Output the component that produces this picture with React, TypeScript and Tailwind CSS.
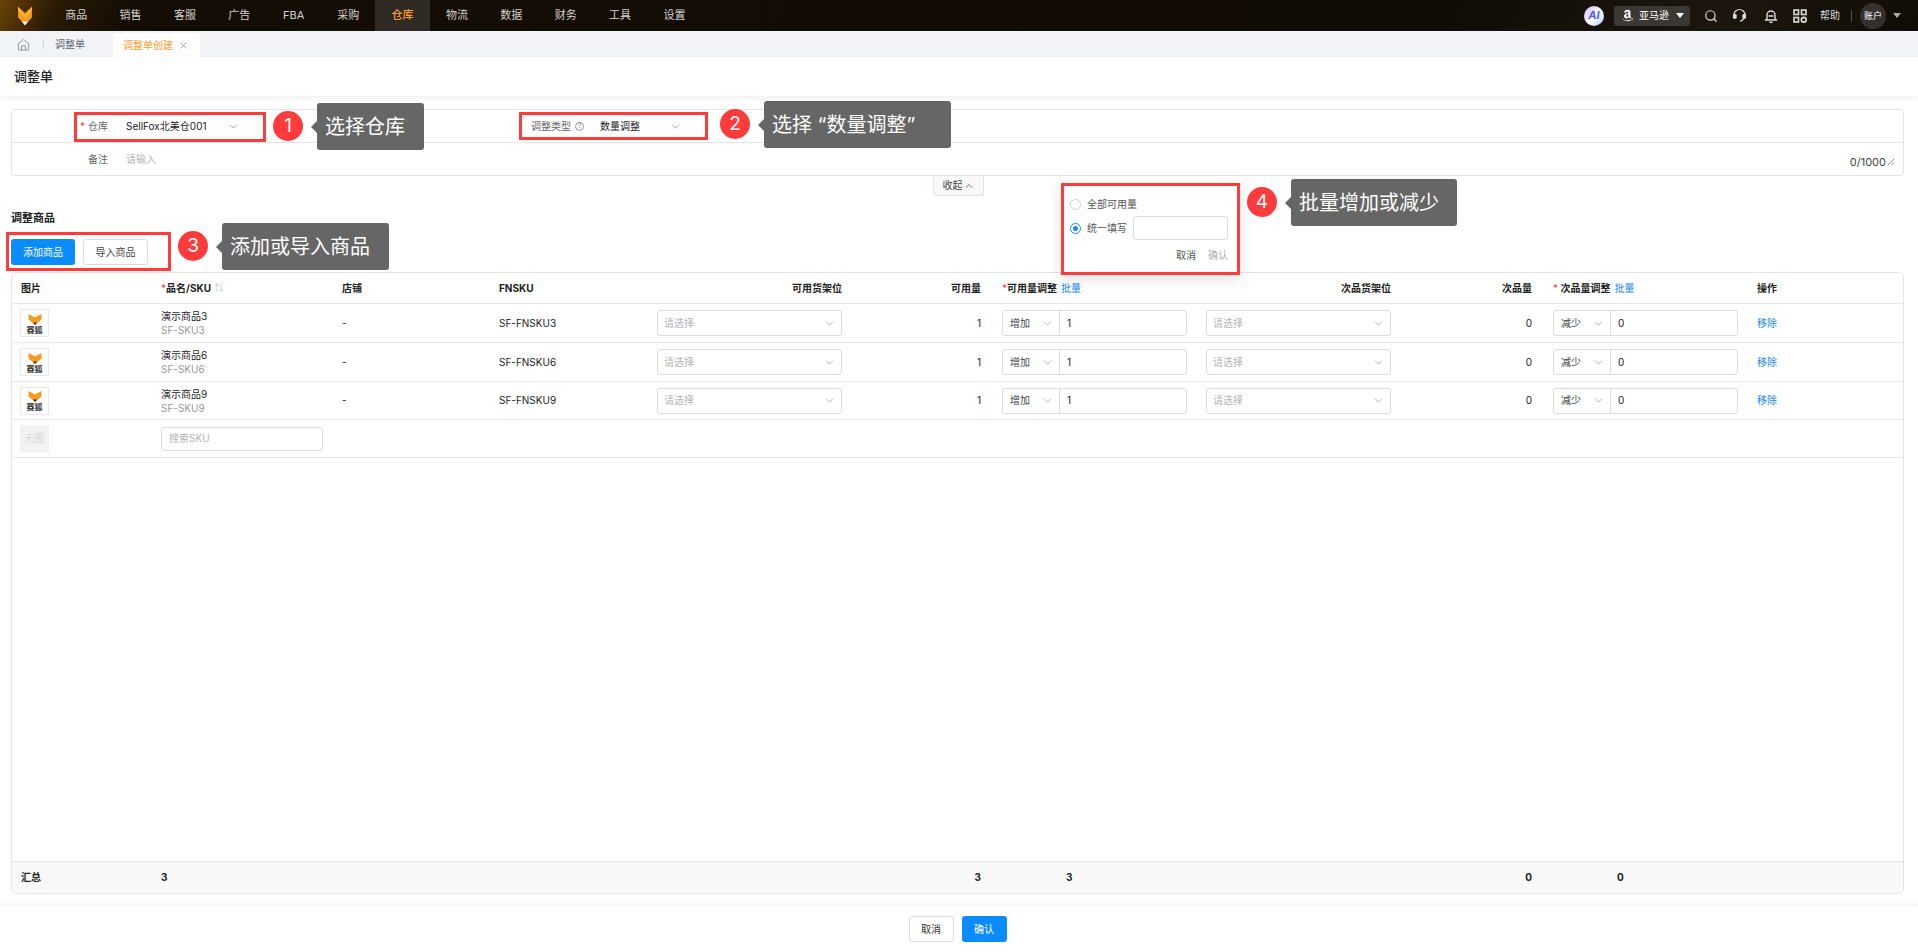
import React from "react";
import { ChevronDown, ChevronUp, Search, X } from "lucide-react";
import { FaAmazon } from "react-icons/fa";

const FONT = "font-['Inter','Noto_Sans_CJK_SC',sans-serif]";
const NAV_ITEMS = ["商品", "销售", "客服", "广告", "FBA", "采购", "仓库", "物流", "数据", "财务", "工具", "设置"];
const COLS = "grid grid-cols-[149px_181px_157px_158px_185px_139px_225px_185px_141px_225px_1fr]";

const rows = [
  { name: "演示商品3", sku: "SF-SKU3", fnsku: "SF-FNSKU3", h: "h-[39px]" },
  { name: "演示商品6", sku: "SF-SKU6", fnsku: "SF-FNSKU6", h: "h-[39px]" },
  { name: "演示商品9", sku: "SF-SKU9", fnsku: "SF-FNSKU9", h: "h-[38px]" },
];

const Thumb = () => (
  <div className="flex h-[28px] w-[29px] flex-col items-center justify-center border border-[#e8e8e8] bg-white">
    <svg viewBox="0 0 28 24" className="h-[13px] w-[14px]">
      <path d="M1 1 L14 8 L27 1 L27 12 L14 23 L1 12 Z" fill="#f59a23" />
      <path d="M10 18 L18 18 L14 23 Z" fill="#333" />
    </svg>
    <span className="text-[8px] leading-[8px] font-bold text-[#333]">赛狐</span>
  </div>
);

const Select = ({ placeholder }: { placeholder: string }) => (
  <div className="flex h-[26px] w-[185px] items-center justify-between rounded-[3px] border border-[#dcdcdc] bg-white pr-[5px] pl-[6px]">
    <span className="text-[10px] text-[#b5b5b5]">{placeholder}</span>
    <ChevronDown size={13} strokeWidth={1.4} className="text-[#999]" />
  </div>
);

const Adjust = ({ mode, value }: { mode: string; value: string }) => (
  <div className="flex h-[26px] w-[185px] items-center rounded-[3px] border border-[#dcdcdc] bg-white">
    <div className="flex h-full w-[57px] items-center justify-between border-r border-[#dcdcdc] pr-[5px] pl-[7px]">
      <span className="text-[10px] text-[#444]">{mode}</span>
      <ChevronDown size={13} strokeWidth={1.4} className="text-[#999]" />
    </div>
    <span className="pl-[7px] text-[10px] text-[#222]">{value}</span>
  </div>
);

const RedBox = ({ className }: { className: string }) => (
  <div className={`pointer-events-none absolute border-[3px] border-[#ff3b3b] ${className}`} />
);

const Badge = ({ n, className }: { n: number; className: string }) => (
  <div className={`absolute flex h-[30px] w-[30px] items-center justify-center rounded-full bg-[#ff3b3b] text-[19px] text-white ${className}`}>
    {n}
  </div>
);

const Callout = ({ text, className }: { text: string; className: string }) => (
  <div className={`absolute flex h-[47px] items-center rounded-[3px] bg-[#666666] pl-[8px] text-[20px] whitespace-nowrap text-white ${className}`}>
    <span className="absolute top-[18px] left-[-6px] h-0 w-0 border-y-[6px] border-r-[6px] border-y-transparent border-r-[#666666]" />
    {text}
  </div>
);

const TopBar = () => (
  <header className="flex h-[31px] shrink-0 items-center bg-[linear-gradient(115deg,#6b4306_0%,#2a1a05_3%,#140d05_7%,#120c06_75%,#1c160f_90%,#120c06_100%)]">
    <div className="flex w-[49px] justify-center">
      <svg viewBox="0 0 20 26" className="h-[20px] w-[18px]">
        <path d="M1 1 L10 9 L19 1 L19 15 L10 25 L1 15 Z" fill="#f59a23" />
        <path d="M1 1 L10 13 L19 1 L19 5 L10 17 L1 5 Z" fill="#ffb52e" />
        <path d="M6 20 L14 20 L10 25 Z" fill="#fff" />
      </svg>
    </div>
    <nav className="flex h-full">
      {NAV_ITEMS.map((item) => (
        <div
          key={item}
          className={`flex h-full w-[54.4px] items-center justify-center text-[11px] ${
            item === "仓库" ? "bg-[#2f2a24] font-medium text-[#ff9a2e]" : "text-[#d4d2cf]"
          }`}
        >
          {item}
        </div>
      ))}
    </nav>
    <div className="ml-auto flex h-full items-center text-[#dddddd]">
      <div className="flex h-[20px] w-[20px] items-center justify-center rounded-full bg-[linear-gradient(135deg,#c9b8ff,#ffffff_55%,#a7c4ff)] text-[11px] font-bold text-[#4b5cf0] italic">
        AI
      </div>
      <div className="ml-[10px] flex h-[20px] w-[76px] items-center rounded-[3px] bg-[#3b3733] pl-[7px]">
        <FaAmazon size={13} className="text-white" />
        <span className="ml-[5px] text-[10px] text-white">亚马逊</span>
        <span className="ml-[7px] h-0 w-0 border-x-[4px] border-t-[5px] border-x-transparent border-t-white" />
      </div>
      <Search size={14} strokeWidth={2} className="ml-[14px]" />
      <svg viewBox="0 0 16 16" className="ml-[14px] h-[15px] w-[15px]" fill="none" stroke="currentColor" strokeWidth="1.5">
        <path d="M3 11 A6 6 0 1 1 13 11 L9 14.5" />
        <rect x="1" y="6.5" width="4" height="5" rx="1.5" fill="currentColor" stroke="none" />
        <rect x="11" y="6.5" width="4" height="5" rx="1.5" fill="currentColor" stroke="none" />
      </svg>
      <svg viewBox="0 0 14 14" className="ml-[17px] h-[14px] w-[14px]" fill="none" stroke="currentColor" strokeWidth="1.4">
        <path d="M3 11 V6 a4 4 0 0 1 8 0 V11 M0.8 11 H13.2 M4.5 7 H9.5 M5.5 13.2 H8.5" />
      </svg>
      <svg viewBox="0 0 14 14" className="ml-[15px] h-[14px] w-[14px]" fill="none" stroke="currentColor" strokeWidth="1.6">
        <rect x="1" y="1" width="4.5" height="4.5" />
        <rect x="8.5" y="1" width="4.5" height="4.5" />
        <rect x="1" y="8.5" width="4.5" height="4.5" />
        <circle cx="10.75" cy="10.75" r="2.4" />
      </svg>
      <span className="ml-[13px] text-[10px]">帮助</span>
      <span className="ml-[11px] h-[12px] w-px bg-[#55514c]" />
      <div className="ml-[8px] flex h-[26px] w-[26px] items-center justify-center rounded-full bg-[#34302c] text-[9px] text-white">
        账户
      </div>
      <span className="mr-[17px] ml-[7px] h-0 w-0 border-x-[4px] border-t-[5px] border-x-transparent border-t-[#aaa]" />
    </div>
  </header>
);

const TabBar = () => (
  <div className="flex h-[26px] shrink-0 items-end bg-[#f1f3f7]">
    <div className="flex h-full w-[113px] items-center pl-[17px]">
      <svg viewBox="0 0 14 14" className="h-[13px] w-[13px] text-[#8a93a0]" fill="none" stroke="currentColor" strokeWidth="1">
        <path d="M1.5 6 L7 1.5 L12.5 6 V13 H1.5 Z M5 13 V8.5 H9 V13" />
      </svg>
      <span className="ml-[13px] h-[10px] w-px bg-[#d5d8dd]" />
      <span className="ml-[11px] text-[10px] text-[#5f6670]">调整单</span>
    </div>
    <div className="flex h-[24px] w-[87px] items-center rounded-t-[3px] bg-white pl-[10px]">
      <span className="text-[10px] text-[#ff9a2e]">调整单创建</span>
      <X size={11} strokeWidth={1.4} className="ml-[5px] text-[#777]" />
    </div>
  </div>
);

const FormCard = () => (
  <div className="mx-[11px] mt-[13px] h-[67px] w-[1893px] shrink-0 rounded-[3px] border border-[#e4e4e4] bg-white">
    <div className="flex h-[33px] items-center border-b border-[#e4e4e4]">
      <div className="flex w-[114px] justify-end pr-[18px] text-[10px] text-[#666]">
        <span className="mr-[3px] text-[#ff3b3b]">*</span>仓库
      </div>
      <div className="flex w-[114px] items-center justify-between text-[10px] text-[#222]">
        <span>SellFox北美仓001</span>
        <ChevronDown size={13} strokeWidth={1.4} className="text-[#888]" />
      </div>
      <span className="ml-[291px] text-[10px] text-[#666]">调整类型</span>
      <span className="ml-[4px] flex h-[9px] w-[9px] items-center justify-center rounded-full border border-[#999] text-[7px] text-[#888]">?</span>
      <div className="ml-[16px] flex w-[82px] items-center justify-between text-[10px] text-[#222]">
        <span>数量调整</span>
        <ChevronDown size={13} strokeWidth={1.4} className="text-[#888]" />
      </div>
    </div>
    <div className="flex h-[32px] items-center">
      <div className="w-[114px] pr-[18px] text-right text-[10px] text-[#666]">备注</div>
      <span className="text-[10px] text-[#b5b5b5]">请输入</span>
      <div className="mt-[6px] ml-auto flex items-center pr-[8px] text-[11px] text-[#444]">
        <span>0/1000</span>
        <svg viewBox="0 0 8 8" className="ml-[1px] h-[8px] w-[8px] text-[#888]" fill="none" stroke="currentColor">
          <path d="M1 7 L7 1 M4.5 7 L7 4.5" />
        </svg>
      </div>
    </div>
  </div>
);

const TableHead = () => (
  <div className={`${COLS} h-[31px] shrink-0 items-center border-b border-[#e8e8e8] text-[10px] font-bold text-[#222]`}>
    <div className="pl-[9px]">图片</div>
    <div className="flex items-center">
      <span className="font-normal text-[#ff3b3b]">*</span>品名/SKU
      <span className="ml-[3px] font-normal text-[#ccc]">⇅</span>
    </div>
    <div>店铺</div>
    <div>FNSKU</div>
    <div className="text-right">可用货架位</div>
    <div className="text-right">可用量</div>
    <div className="pl-[21px]">
      <span className="font-normal text-[#ff3b3b]">*</span>可用量调整<span className="ml-[4px] font-normal text-[#1e88f5]">批量</span>
    </div>
    <div className="text-right">次品货架位</div>
    <div className="text-right">次品量</div>
    <div className="pl-[21px]">
      <span className="font-normal text-[#ff3b3b]">*</span> 次品量调整<span className="ml-[4px] font-normal text-[#1e88f5]">批量</span>
    </div>
    <div>操作</div>
  </div>
);

const TableRow = ({ name, sku, fnsku, h }: { name: string; sku: string; fnsku: string; h: string }) => (
  <div className={`${COLS} ${h} shrink-0 items-center border-b border-[#e8e8e8] text-[10px] text-[#222]`}>
    <div className="pl-[8px]">
      <Thumb />
    </div>
    <div className="leading-[14px]">
      <div>{name}</div>
      <div className="text-[#999]">{sku}</div>
    </div>
    <div>-</div>
    <div>{fnsku}</div>
    <div>
      <Select placeholder="请选择" />
    </div>
    <div className="text-right">1</div>
    <div className="pl-[21px]">
      <Adjust mode="增加" value="1" />
    </div>
    <div>
      <Select placeholder="请选择" />
    </div>
    <div className="text-right">0</div>
    <div className="pl-[21px]">
      <Adjust mode="减少" value="0" />
    </div>
    <div className="text-[#1e88f5]">移除</div>
  </div>
);

const Popover = () => (
  <div className="absolute top-[183px] left-[1061px] h-[92px] w-[179px] bg-white pt-[14px] pl-[9px] text-[10px] text-[#555] shadow-[0_4px_14px_rgba(0,0,0,0.12)]">
    <div className="flex h-[14px] items-center">
      <span className="h-[11px] w-[11px] rounded-full border border-[#d0d0d0]" />
      <span className="ml-[6px]">全部可用量</span>
    </div>
    <div className="mt-[5px] flex h-[24px] items-center">
      <span className="flex h-[11px] w-[11px] items-center justify-center rounded-full border border-[#1e88f5]">
        <span className="h-[5px] w-[5px] rounded-full bg-[#1e88f5]" />
      </span>
      <span className="ml-[6px]">统一填写</span>
      <span className="ml-[6px] h-[24px] w-[95px] rounded-[3px] border border-[#dcdcdc]" />
    </div>
    <div className="mt-[8px] flex justify-end pr-[12px]">
      <span>取消</span>
      <span className="ml-[12px] text-[#b0b0b0]">确认</span>
    </div>
  </div>
);

export default function App() {
  return (
    <div className={`relative flex h-[952px] w-[1918px] flex-col overflow-hidden bg-white ${FONT}`}>
      <TopBar />
      <TabBar />
      <div className="flex h-[39px] shrink-0 items-center pl-[14px] text-[13px] font-medium text-[#222] shadow-[0_2px_5px_rgba(0,0,0,0.07)]">
        调整单
      </div>
      <FormCard />
      <div className="flex h-[20px] shrink-0 justify-center">
        <div className="ml-[-1px] flex h-[20px] w-[51px] items-center justify-center rounded-b-[3px] border border-t-0 border-[#e4e4e4] bg-[#f8f8f8] text-[10px] text-[#444]">
          收起
          <ChevronUp size={12} strokeWidth={1.5} />
        </div>
      </div>
      <div className="mt-[14px] h-[16px] shrink-0 pl-[11px] text-[11px] leading-[16px] font-bold text-[#222]">调整商品</div>
      <div className="mt-[13px] flex shrink-0 pl-[11px]">
        <button className="h-[26px] w-[64px] rounded-[3px] bg-[#0a8cff] text-[10px] text-white">添加商品</button>
        <button className="ml-[8px] h-[26px] w-[65px] rounded-[3px] border border-[#dcdcdc] bg-white text-[10px] text-[#444]">导入商品</button>
      </div>
      <section className="mx-[11px] mt-[7px] flex h-[622px] w-[1893px] shrink-0 flex-col overflow-hidden rounded-[5px] border border-[#e4e4e4]">
        <TableHead />
        {rows.map((row) => (
          <TableRow key={row.sku} {...row} />
        ))}
        <div className={`${COLS} h-[38px] shrink-0 items-center border-b border-[#e8e8e8]`}>
          <div className="pl-[8px]">
            <div className="flex h-[28px] w-[29px] items-center justify-center bg-[#f2f2f2] text-[10px] text-[#d8d8d8]">无图</div>
          </div>
          <div className="col-span-2">
            <div className="flex h-[24px] w-[162px] items-center rounded-[3px] border border-[#dcdcdc] pl-[7px] text-[10px] text-[#b5b5b5]">搜索SKU</div>
          </div>
        </div>
        <div className="flex-1" />
        <div className={`${COLS} h-[32px] shrink-0 items-center border-t border-[#e4e4e4] bg-[#f8f8f8] text-[10px] font-bold text-[#222]`}>
          <div className="pl-[9px]">汇总</div>
          <div>3</div>
          <div />
          <div />
          <div />
          <div className="text-right">3</div>
          <div className="pl-[85px]">3</div>
          <div />
          <div className="text-right">0</div>
          <div className="pl-[85px]">0</div>
        </div>
      </section>
      <footer className="mt-[12px] flex h-[46px] shrink-0 items-center justify-center bg-white pr-[3px] shadow-[0_-2px_5px_rgba(0,0,0,0.05)]">
        <button className="h-[26px] w-[45px] rounded-[3px] border border-[#dcdcdc] bg-white text-[10px] text-[#333]">取消</button>
        <button className="ml-[8px] h-[26px] w-[45px] rounded-[3px] bg-[#0a8cff] text-[10px] text-white">确认</button>
      </footer>

      <Popover />

      <RedBox className="top-[112px] left-[74px] h-[30px] w-[192px]" />
      <Badge n={1} className="top-[111px] left-[273px]" />
      <Callout text="选择仓库" className="top-[103px] left-[317px] w-[107px]" />

      <RedBox className="top-[112px] left-[519px] h-[28px] w-[189px]" />
      <Badge n={2} className="top-[109px] left-[720px]" />
      <Callout text="选择 “数量调整”" className="top-[101px] left-[764px] w-[187px]" />

      <RedBox className="top-[232px] left-[6px] h-[39px] w-[165px]" />
      <Badge n={3} className="top-[231px] left-[178px]" />
      <Callout text="添加或导入商品" className="top-[223px] left-[222px] w-[167px]" />

      <RedBox className="top-[183px] left-[1061px] h-[92px] w-[179px]" />
      <Badge n={4} className="top-[187px] left-[1247px]" />
      <Callout text="批量增加或减少" className="top-[179px] left-[1291px] w-[166px]" />
    </div>
  );
}
